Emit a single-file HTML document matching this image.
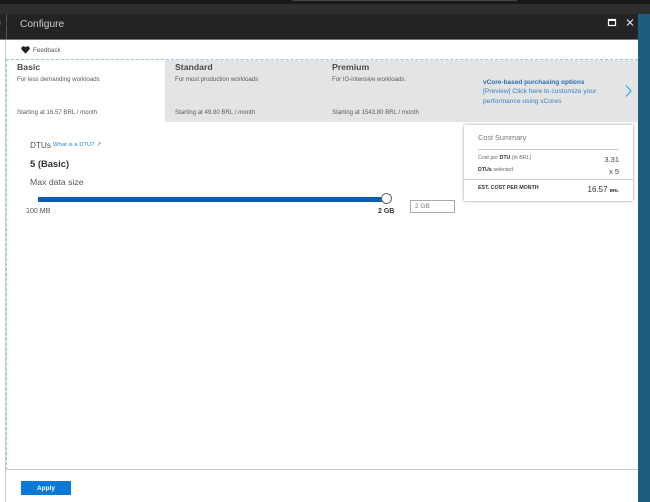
<!DOCTYPE html>
<html><head><meta charset="utf-8"><style>
html,body{margin:0;padding:0}
body{width:650px;height:502px;overflow:hidden;position:relative;background:#fff;font-family:"Liberation Sans",sans-serif;color:#444}
div{position:absolute;white-space:nowrap}
.t{font-size:6.1px;color:#5a5a5a;line-height:8px}
.h{font-size:8.7px;font-weight:bold;color:#4a4a4a;line-height:12px}
</style></head><body>
<div style="left:0;top:0;width:650px;height:4px;background:#191919"></div>
<div style="left:292px;top:0;width:225px;height:1px;background:#444"></div>
<div style="left:0;top:4px;width:650px;height:10px;background:#2e2e2e"></div>
<div style="left:0;top:14px;width:638px;height:25px;background:#232323"></div>
<div style="left:638px;top:14px;width:12px;height:488px;background:#1f5c80"></div>
<div style="left:0;top:39px;width:638px;height:1px;background:#777"></div>
<div style="left:6px;top:14px;width:1px;height:25px;background:#555"></div>
<div style="left:-1px;top:18px;font-size:8px;line-height:10px;color:#777">‹</div>
<div style="left:20px;top:17px;font-size:10.2px;line-height:16px;color:#ccc">Configure</div>
<svg style="position:absolute;left:607px;top:18px" width="28" height="10"><rect x="1.5" y="1.5" width="7" height="6" fill="none" stroke="#fff" stroke-width="1.2"/><rect x="1" y="1" width="8" height="2" fill="#fff"/><path d="M20 1.5l6 6M26 1.5l-6 6" stroke="#eee" stroke-width="1.1"/></svg>
<div style="left:5px;top:40px;width:1px;height:462px;background:#ccc"></div>
<svg style="position:absolute;left:21px;top:46px" width="9" height="8"><path d="M4.5 7.6L.6 3.6C-.4 1.8 1 .2 2.5.2c.9 0 1.6.5 2 1.1.4-.6 1.1-1.1 2-1.1 1.5 0 2.9 1.6 1.9 3.4z" fill="#222"/></svg>
<div style="left:33px;top:47px;font-size:6.3px;line-height:8px;color:#555">Feedback</div>
<div style="left:165px;top:60px;width:473px;height:62px;background:#e4e4e4"></div>
<div style="left:6px;top:59px;width:632px;height:0;border-top:1px dashed #7fd0e8"></div>
<div style="left:6px;top:59px;width:0;height:411px;border-left:1px dashed #7fd0e8"></div>
<div class="h" style="left:17px;top:61px">Basic</div>
<div class="t" style="left:17px;top:76px">For less demanding workloads</div>
<div class="t" style="left:17px;top:109px">Starting at 16.57 BRL / month</div>
<div class="h" style="left:175px;top:61px">Standard</div>
<div class="t" style="left:175px;top:76px">For most production workloads</div>
<div class="t" style="left:175px;top:109px">Starting at 49.80 BRL / month</div>
<div class="h" style="left:332px;top:61px">Premium</div>
<div class="t" style="left:332px;top:76px">For IO-intensive workloads.</div>
<div class="t" style="left:332px;top:109px">Starting at 1543.80 BRL / month</div>
<div style="left:483px;top:78px;font-size:6.5px;line-height:9px;font-weight:bold;color:#2a6db5">vCore-based purchasing options</div>
<div style="left:483px;top:87px;font-size:6.7px;line-height:9.5px;color:#3a7fc4">[Preview] Click here to customize your<br>performance using vCores</div>
<svg style="position:absolute;left:624px;top:84px" width="10" height="14"><path d="M2 1.5L7 7L2 12.5" fill="none" stroke="#2db4e8" stroke-width="1.3"/></svg>
<div style="left:30px;top:140px;font-size:8.2px;line-height:12px;color:#555">DTUs</div>
<div style="left:53px;top:141px;font-size:5.9px;line-height:8px;color:#2b88d8">What is a DTU? ↗</div>
<div style="left:30px;top:157px;font-size:9.4px;line-height:14px;font-weight:bold;color:#333">5 (Basic)</div>
<div style="left:30px;top:176px;font-size:8.7px;line-height:13px;color:#555">Max data size</div>
<div style="left:38px;top:197px;width:345px;height:5px;background:#0a5eb0"></div>
<div style="left:381px;top:193px;width:9px;height:9px;border:1px solid #666;border-radius:50%;background:#fff"></div>
<div style="left:26px;top:207px;font-size:7.1px;line-height:9px;color:#555">100 MB</div>
<div style="left:378px;top:207px;font-size:7px;line-height:9px;font-weight:bold;color:#333">2 GB</div>
<div style="left:410px;top:200px;width:43px;height:11px;border:1px solid #aaa"></div>
<div style="left:415px;top:202px;font-size:6.5px;line-height:10px;color:#777">2 GB</div>
<div style="left:464px;top:125px;width:169px;height:76px;background:#fff;box-shadow:0 0 3px rgba(0,0,0,.4)"></div>
<div style="left:478px;top:133px;font-size:7.3px;line-height:10px;color:#777">Cost Summary</div>
<div style="left:478px;top:149px;width:141px;height:1px;background:#ccc"></div>
<div style="left:478px;top:155px;font-size:5.3px;line-height:7px;color:#666">Cost per <b style="color:#333">DTU</b> (in BRL)</div>
<div style="left:478px;top:167px;font-size:5.3px;line-height:7px;color:#666"><b style="color:#333">DTUs</b> selected</div>
<div style="right:31px;top:155px;font-size:7.5px;line-height:10px;color:#444">3.31</div>
<div style="right:31px;top:167px;font-size:7.5px;line-height:10px;color:#444">x 5</div>
<div style="left:464px;top:179px;width:169px;height:1px;background:#ccc"></div>
<div style="left:478px;top:185px;font-size:5.3px;line-height:7px;font-weight:bold;color:#333">EST. COST PER MONTH</div>
<div style="right:31px;top:184px;font-size:8px;line-height:11px;color:#333">16.57 <b style="font-size:4.5px">BRL</b></div>
<div style="left:6px;top:469px;width:632px;height:1px;background:#ccc"></div>
<div style="left:21px;top:481px;width:50px;height:14px;background:#0a78d7"></div>
<div style="left:21px;top:482px;width:50px;color:#fff;font-size:6.5px;font-weight:bold;line-height:14px;text-align:center">Apply</div>
</body></html>
